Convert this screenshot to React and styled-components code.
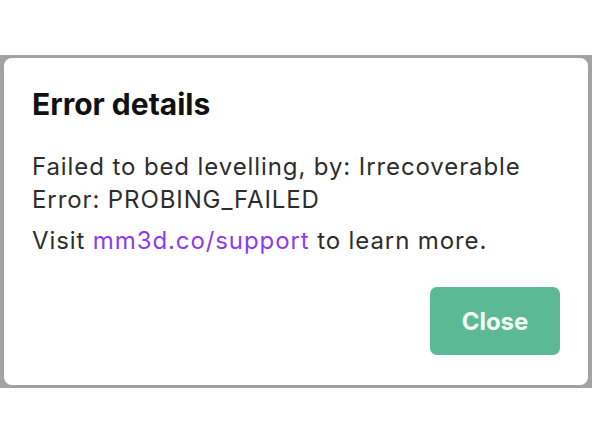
import * as React from "react"
import styled, { createGlobalStyle } from "styled-components"

const GlobalStyle = createGlobalStyle`
  html, body {
    margin: 0;
    padding: 0;
    background: #ffffff;
  }
  body {
    font-family: Inter, "Liberation Sans", Arial, sans-serif;
    -webkit-font-smoothing: antialiased;
  }
`

const Page = styled.div`
  width: 592px;
  height: 444px;
  padding-top: 55px;
  box-sizing: border-box;
  background: #ffffff;
`

const Backdrop = styled.div`
  height: 333px;
  padding: 3px 4px;
  box-sizing: border-box;
  background: #a2a2a2;
`

const Dialog = styled.div`
  height: 100%;
  box-sizing: border-box;
  background: #ffffff;
  border-radius: 8px;
  padding: 28px 28px 30px 28px;
  display: flex;
  flex-direction: column;
`

const Title = styled.h2`
  margin: 0 0 28px 0;
  font-size: 30px;
  line-height: 36px;
  font-weight: 700;
  color: #111111;
`

const Text = styled.p`
  margin: 0 0 8px 0;
  font-size: 24px;
  line-height: 33px;
  letter-spacing: 0.9px;
  color: #2d2d2d;
`

const Link = styled.a`
  color: #8c3cf0;
  text-decoration: none;
`

const Footer = styled.div`
  margin-top: auto;
  display: flex;
  justify-content: flex-end;
`

const Button = styled.button`
  width: 130px;
  height: 68px;
  border: none;
  border-radius: 7px;
  background: #5bba95;
  color: #f4fbf8;
  font-family: inherit;
  font-size: 24px;
  font-weight: 700;
  cursor: pointer;
`

export default function App() {
  return (
    <>
      <GlobalStyle />
      <Page>
        <Backdrop>
          <Dialog>
            <Title>Error details</Title>
            <Text>
              Failed to bed levelling, by: Irrecoverable
              <br />
              Error: PROBING_FAILED
            </Text>
            <Text>
              Visit <Link href="#">mm3d.co/support</Link> to learn more.
            </Text>
            <Footer>
              <Button>Close</Button>
            </Footer>
          </Dialog>
        </Backdrop>
      </Page>
    </>
  )
}
